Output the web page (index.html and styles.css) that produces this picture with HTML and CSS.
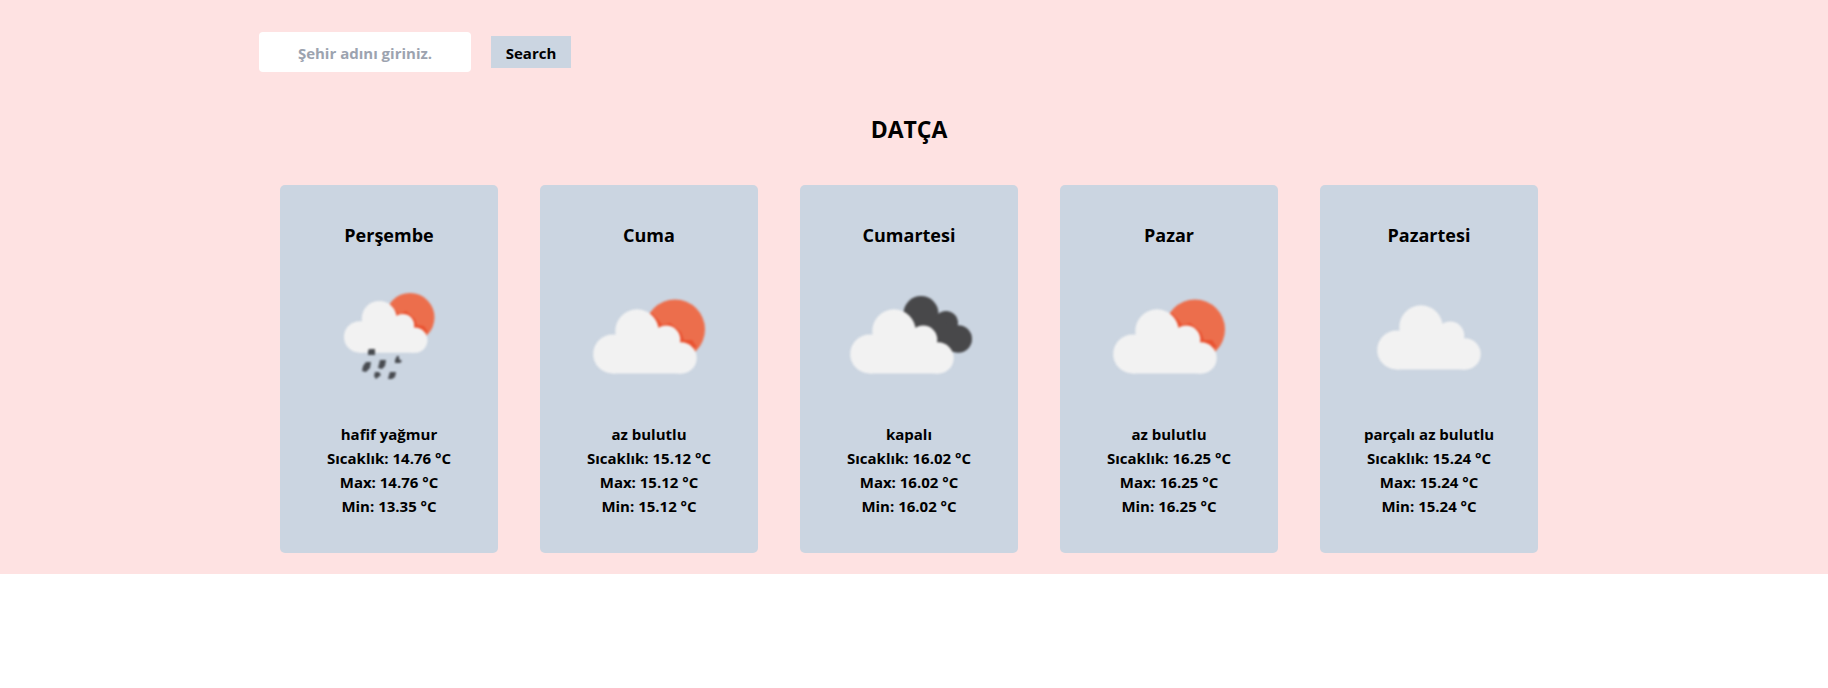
FILE: index.html
```html
<!DOCTYPE html>
<html lang="tr">
<head>
<meta charset="utf-8">
<meta name="viewport" content="width=device-width, initial-scale=1">
<title>Hava Durumu</title>
<link rel="stylesheet" href="styles.css">
</head>
<body>
<svg class="sprite" aria-hidden="true">
  <symbol id="cloud" viewBox="0 0 150 150">
    <path d="M39 74L55 73L80 66L96 78L101 84L108 90V98H39Z"/>
    <circle cx="63" cy="70" r="21.7"/>
    <circle cx="38.7" cy="93" r="19.5"/>
    <circle cx="92.3" cy="78.6" r="14"/>
    <circle cx="107" cy="97" r="15.7"/>
    <path d="M38.7 90H107V112.6H38.7Z"/>
  </symbol>
  <symbol id="sun-cloud" viewBox="0 0 150 150">
    <circle class="sun" cx="101" cy="68.5" r="30"/>
    <path class="sun-edge" d="M77 51L86 61L88 64L96 62L107 71L110 79L118 79L123 86L100 92L80 80Z"/>
    <use class="cloud" href="#cloud" width="150" height="150"/>
  </symbol>
</svg>
<main class="page">
  <div class="container">
    <form class="search" onsubmit="return false">
      <input class="search-input" type="text" placeholder="Şehir adını giriniz." aria-label="Şehir adı">
      <button class="search-button" type="submit">Search</button>
    </form>
    <h1 class="city">DATÇA</h1>
    <div class="days">
      <section class="card">
        <h2 class="day">Perşembe</h2>
        <svg class="icon" viewBox="0 0 150 150" role="img" aria-label="hafif yağmur">
          <circle class="sun" cx="96" cy="56.5" r="24.5"/>
          <path class="sun-edge" d="M77 43L84 52L85 54L92 50L101 58L103 64L110 65L114 71L96 76L80 66Z"/>
          <use class="cloud" href="#cloud" width="150" height="150" transform="translate(14.5 1) scale(.806)"/>
          <g class="drops">
            <path d="M55 88H61V94H54V90Z"/>
            <path d="M52 101H57L56 107L52 111L48 110L49 105Z"/>
            <path d="M66 99H72L71 105L68 108L64 107Z"/>
            <path d="M83 95H85V98L88 100L86 102H81V99Z"/>
            <path d="M61 111H65L67 114L62 118L60 115Z"/>
            <path d="M76 111H82L81 116L78 118H74L75 114Z"/>
          </g>
        </svg>
        <p class="line">hafif yağmur</p>
        <p class="line">Sıcaklık: 14.76 °C</p>
        <p class="line">Max: 14.76 °C</p>
        <p class="line">Min: 13.35 °C</p>
      </section>
      <section class="card">
        <h2 class="day">Cuma</h2>
        <svg class="icon" viewBox="0 0 150 150" role="img" aria-label="az bulutlu">
          <use href="#sun-cloud" width="150" height="150"/>
        </svg>
        <p class="line">az bulutlu</p>
        <p class="line">Sıcaklık: 15.12 °C</p>
        <p class="line">Max: 15.12 °C</p>
        <p class="line">Min: 15.12 °C</p>
      </section>
      <section class="card">
        <h2 class="day">Cumartesi</h2>
        <svg class="icon" viewBox="0 0 150 150" role="img" aria-label="kapalı">
          <g class="dark-cloud">
            <circle cx="87" cy="52.5" r="17.5"/>
            <circle cx="112" cy="62" r="12"/>
            <circle cx="124.3" cy="78" r="13.7"/>
            <path d="M75 55L103 58L122 66L120 91L90 80Z"/>
          </g>
          <use class="cloud" href="#cloud" width="150" height="150" transform="translate(-3 0)"/>
        </svg>
        <p class="line">kapalı</p>
        <p class="line">Sıcaklık: 16.02 °C</p>
        <p class="line">Max: 16.02 °C</p>
        <p class="line">Min: 16.02 °C</p>
      </section>
      <section class="card">
        <h2 class="day">Pazar</h2>
        <svg class="icon" viewBox="0 0 150 150" role="img" aria-label="az bulutlu">
          <use href="#sun-cloud" width="150" height="150"/>
        </svg>
        <p class="line">az bulutlu</p>
        <p class="line">Sıcaklık: 16.25 °C</p>
        <p class="line">Max: 16.25 °C</p>
        <p class="line">Min: 16.25 °C</p>
      </section>
      <section class="card">
        <h2 class="day">Pazartesi</h2>
        <svg class="icon" viewBox="0 0 150 150" role="img" aria-label="parçalı az bulutlu">
          <use class="cloud" href="#cloud" width="150" height="150" transform="translate(4 -4)"/>
        </svg>
        <p class="line">parçalı az bulutlu</p>
        <p class="line">Sıcaklık: 15.24 °C</p>
        <p class="line">Max: 15.24 °C</p>
        <p class="line">Min: 15.24 °C</p>
      </section>
    </div>
  </div>
</main>
</body>
</html>
```

FILE: styles.css
```css
* {
  box-sizing: border-box;
}

body {
  margin: 0;
  background: #fff;
  color: #000;
  font-family: "Segoe UI", "Open Sans", "Noto Sans", sans-serif;
  font-size: 15px;
  font-weight: 700;
  line-height: 24px;
}

.sprite {
  display: none;
}

.page {
  padding: 32px 10px 21px 0;
  background: #fee2e2;
}

.container {
  max-width: 1300px;
  margin: 0 auto;
}

.search {
  display: flex;
  align-items: center;
  gap: 20px;
}

.search-input {
  width: 212px;
  height: 40px;
  padding: 9px 8px 7px;
  border: 0;
  border-radius: 4px;
  background: #fff;
  font: inherit;
  text-align: center;
}

.search-input::placeholder {
  color: #9ca3af;
  opacity: 1;
}

.search-button {
  width: 80px;
  padding: 5px 0 3px;
  border: 0;
  background: #cbd5e1;
  color: #000;
  font: inherit;
}

.city {
  margin: 41px 0 39px;
  font-size: 23px;
  font-weight: 700;
  line-height: 33px;
  text-align: center;
}

.days {
  display: grid;
  grid-template-columns: repeat(5, minmax(0, 1fr));
  gap: 42px;
  padding: 0 21px;
}

.card {
  padding: 36px 0 35px;
  border-radius: 5px;
  background: #cbd5e1;
  text-align: center;
}

.day {
  margin: 0;
  font-size: 18px;
  font-weight: 700;
  line-height: 28px;
}

.icon {
  display: block;
  width: 150px;
  max-width: 100%;
  height: 150px;
  margin: 12px auto 11px;
  filter: blur(1px);
}

.line {
  margin: 0;
}

.cloud {
  fill: #f2f2f2;
}

.sun {
  fill: #ec6e4c;
}

.sun-edge {
  fill: #ea5230;
}

.dark-cloud {
  fill: #48484a;
}

.drops {
  fill: #484b50;
}
```
